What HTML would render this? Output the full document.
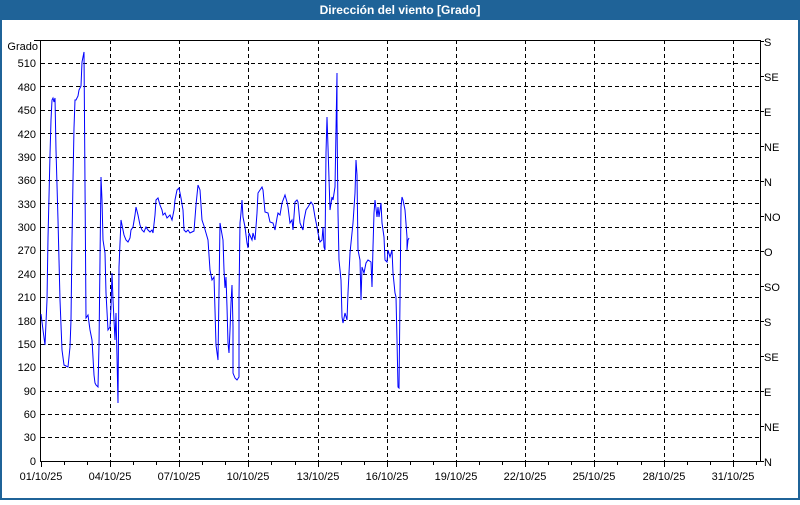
<!DOCTYPE html>
<html><head><meta charset="utf-8"><style>
body{margin:0;width:800px;height:500px;overflow:hidden;background:#fff;font-family:"Liberation Sans",sans-serif}
</style></head><body>
<svg width="800" height="500" xmlns="http://www.w3.org/2000/svg" font-family="Liberation Sans, sans-serif" font-size="11">
<rect x="0" y="0" width="800" height="500" fill="#1f6398"/>
<rect x="2" y="20" width="796" height="478" fill="#fff"/>
<text x="400" y="14" fill="#fff" font-weight="bold" font-size="12" text-anchor="middle">Dirección del viento [Grado]</text>
<g stroke="#000" stroke-dasharray="4,3" stroke-width="1">
<line x1="41" x2="760" y1="63.5" y2="63.5"/><line x1="41" x2="760" y1="86.5" y2="86.5"/><line x1="41" x2="760" y1="110.5" y2="110.5"/><line x1="41" x2="760" y1="133.5" y2="133.5"/><line x1="41" x2="760" y1="157.5" y2="157.5"/><line x1="41" x2="760" y1="180.5" y2="180.5"/><line x1="41" x2="760" y1="203.5" y2="203.5"/><line x1="41" x2="760" y1="227.5" y2="227.5"/><line x1="41" x2="760" y1="250.5" y2="250.5"/><line x1="41" x2="760" y1="274.5" y2="274.5"/><line x1="41" x2="760" y1="297.5" y2="297.5"/><line x1="41" x2="760" y1="320.5" y2="320.5"/><line x1="41" x2="760" y1="344.5" y2="344.5"/><line x1="41" x2="760" y1="367.5" y2="367.5"/><line x1="41" x2="760" y1="391.5" y2="391.5"/><line x1="41" x2="760" y1="414.5" y2="414.5"/><line x1="41" x2="760" y1="437.5" y2="437.5"/>
<line y1="40" y2="461" x1="110.5" x2="110.5"/><line y1="40" y2="461" x1="179.5" x2="179.5"/><line y1="40" y2="461" x1="248.5" x2="248.5"/><line y1="40" y2="461" x1="318.5" x2="318.5"/><line y1="40" y2="461" x1="387.5" x2="387.5"/><line y1="40" y2="461" x1="456.5" x2="456.5"/><line y1="40" y2="461" x1="525.5" x2="525.5"/><line y1="40" y2="461" x1="594.5" x2="594.5"/><line y1="40" y2="461" x1="664.5" x2="664.5"/><line y1="40" y2="461" x1="733.5" x2="733.5"/>
</g>
<path d="M40.5 40V461.5H760.5V40M34 40.5H760" stroke="#000" fill="none"/>
<g stroke="#000">
<path d="M64.5 461v4M87.5 461v4M133.5 461v4M156.5 461v4M202.5 461v4M225.5 461v4M271.5 461v4M295.5 461v4M341.5 461v4M364.5 461v4M410.5 461v4M433.5 461v4M479.5 461v4M502.5 461v4M548.5 461v4M571.5 461v4M617.5 461v4M641.5 461v4M687.5 461v4M710.5 461v4M756.5 461v4"/>
<path d="M110.5 461v6M179.5 461v6M248.5 461v6M318.5 461v6M387.5 461v6M456.5 461v6M525.5 461v6M594.5 461v6M664.5 461v6M733.5 461v6M41.5 461v6"/>
<path d="M760 41.5h4M760 76.5h4M760 111.5h4M760 146.5h4M760 181.5h4M760 216.5h4M760 251.5h4M760 286.5h4M760 321.5h4M760 356.5h4M760 391.5h4M760 426.5h4M760 461.5h4"/>
</g>
<g fill="#000" text-anchor="end">
<text x="38" y="50">Grado</text>
<text x="36" y="67">510</text><text x="36" y="91">480</text><text x="36" y="114">450</text><text x="36" y="138">420</text><text x="36" y="161">390</text><text x="36" y="184">360</text><text x="36" y="208">330</text><text x="36" y="231">300</text><text x="36" y="254">270</text><text x="36" y="278">240</text><text x="36" y="301">210</text><text x="36" y="325">180</text><text x="36" y="348">150</text><text x="36" y="371">120</text><text x="36" y="395">90</text><text x="36" y="418">60</text><text x="36" y="441">30</text><text x="36" y="465">0</text>
</g>
<g fill="#000">
<text x="764" y="46">S</text><text x="764" y="81">SE</text><text x="764" y="116">E</text><text x="764" y="151">NE</text><text x="764" y="186">N</text><text x="764" y="221">NO</text><text x="764" y="256">O</text><text x="764" y="291">SO</text><text x="764" y="326">S</text><text x="764" y="361">SE</text><text x="764" y="396">E</text><text x="764" y="431">NE</text><text x="764" y="466">N</text>
</g>
<g fill="#000" text-anchor="middle">
<text x="41" y="480">01/10/25</text><text x="110" y="480">04/10/25</text><text x="179" y="480">07/10/25</text><text x="248" y="480">10/10/25</text><text x="318" y="480">13/10/25</text><text x="387" y="480">16/10/25</text><text x="456" y="480">19/10/25</text><text x="525" y="480">22/10/25</text><text x="594" y="480">25/10/25</text><text x="664" y="480">28/10/25</text><text x="733" y="480">31/10/25</text>
</g>
<polyline fill="none" stroke="#0000ff" stroke-width="1" points="41,314 43,330 45,345 47,300 48,238 50,155 51,120 52,100 53,98 54,102 55,98 56,150 58,220 60,300 62,350 64,365 66,366 68,367 70,347 71,320 72,240 73,180 74,128 75,100 76,100 78,96 79,90 80,88 81,86 82,62 84,52 85,185 86,318 88,315 90,330 92,340 94,375 95,383 96,385 98,387 99,345 100,260 101,177 102,200 103,240 105,253 106,293 108,330 110,327 111,307 112,273 113,300 115,340 116,313 117,357 118,403 119,267 121,220 122,225 124,235 126,240 128,242 130,238 131,230 133,227 135,215 136,207 138,215 140,225 142,230 144,232 146,227 148,230 150,232 152,230 153,233 155,215 156,200 158,198 160,205 162,210 163,215 165,213 167,218 170,215 172,220 174,210 175,200 177,190 179,188 181,198 183,210 184,230 186,232 188,230 190,233 192,232 194,231 196,205 198,185 200,190 202,220 204,226 206,233 208,240 210,270 212,280 214,277 215,310 216,345 218,360 220,223 223,240 224,270 225,288 226,277 227,307 228,343 229,353 230,330 231,303 232,285 233,327 233,373 235,378 237,380 239,377 239,297 240,223 241,213 242,200 243,217 245,227 247,243 248,248 249,233 252,240 253,233 255,240 257,213 258,193 262,187 263,190 265,212 268,213 270,222 273,223 275,230 277,218 278,213 280,215 282,203 285,195 287,202 288,207 290,223 292,220 293,230 295,202 297,200 298,202 300,223 303,230 304,220 306,210 308,207 311,202 313,205 315,217 317,227 318,233 320,242 322,240 323,227 324,247 325,250 326,153 327,117 328,147 330,210 332,197 333,200 335,187 336,130 337,73 337,120 338,213 339,260 341,280 342,317 343,323 345,313 347,320 348,293 350,253 352,233 353,223 355,193 356,160 357,175 358,250 360,260 361,300 362,267 364,273 366,263 368,260 371,262 372,287 373,247 374,213 375,200 377,217 378,207 379,217 381,203 382,223 384,237 385,260 387,262 388,250 390,257 392,250 393,273 395,293 396,297 397,340 398,387 399,388 400,300 401,207 402,197 403,200 405,210 407,237 407,250 408,240 409,238"/>
</svg>
</body></html>
